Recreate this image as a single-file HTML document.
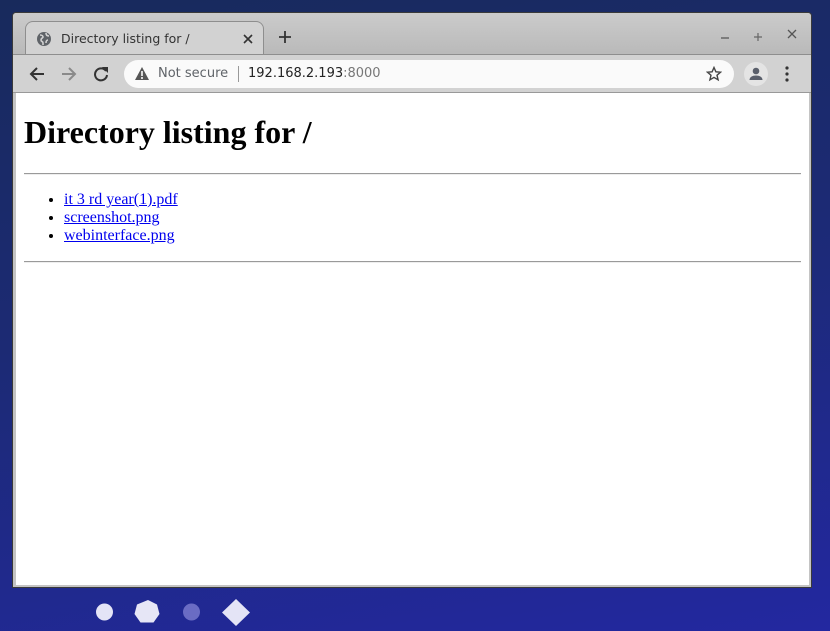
<!DOCTYPE html>
<html><head><meta charset="utf-8"><style>
*{box-sizing:border-box}
html,body{margin:0;width:830px;height:631px;overflow:hidden}
body{background:linear-gradient(170deg,#182a5c 0%,#1c2a74 45%,#2328a0 100%);position:relative;font-family:"Liberation Sans","DejaVu Sans",sans-serif}
.win{position:absolute;left:12px;top:12px;width:800px;height:576px;background:#c4c4c4;border:1px solid #3a3a3a;border-radius:4px 4px 0 0;overflow:hidden}
.tabs{position:absolute;left:0;top:0;right:0;height:42px;background:linear-gradient(#cbcbcb,#b9b9b9)}
.tab{position:absolute;left:12px;top:8px;width:239px;height:34px;background:#d2d2d2;border:1px solid #8e8e8e;border-bottom:none;border-radius:8px 8px 0 0}
.tab .t{position:absolute;left:35px;top:9px;color:#333;font-family:"DejaVu Sans",sans-serif;font-size:12.5px}
.toolbar{position:absolute;left:0;top:41px;right:0;height:39px;background:#d2d2d2;border-top:1px solid #8e8e8e;border-bottom:1px solid #999}
.omni{position:absolute;left:111px;top:5px;width:610px;height:28px;background:#fafafa;border-radius:14px}
.omni .ns{position:absolute;left:34px;top:6px;color:#5f6368;font-family:"DejaVu Sans",sans-serif;font-size:13px}
.omni .sep{position:absolute;left:114px;top:6px;width:1px;height:16px;background:#999}
.omni .url{position:absolute;left:124px;top:6px;font-family:"DejaVu Sans",sans-serif;font-size:13px;color:#222}
.content{position:absolute;left:3px;top:80px;width:793px;height:492px;background:#fff}
.page{margin:8px;font-family:"Liberation Serif",serif;font-size:16px;color:#000}
h1{font-size:32px;margin:21.44px 0}
hr{border:none;border-top:1px solid #9a9a9a;border-bottom:1px solid #eee;margin:8px 0}
ul{margin:16px 0;padding-left:40px}
a{color:#0000ee}
svg{position:absolute}
</style></head><body>
<div class="win">
 <div class="tabs">
  <div class="tab"><svg style="left:10px;top:9px" width="16" height="16" viewBox="0 0 16 16"><circle cx="8" cy="8" r="7" fill="#5f6368"/><path d="M4 4c2 0 3 1 3 2s-2 1-2 3 2 1 2 3v2M10 2c0 2 1 3 3 3M12 9c-1 0-2 1-2 3" stroke="#d2d2d2" stroke-width="1.6" fill="none"/></svg><span class="t">Directory listing for /</span>
  <svg style="left:217px;top:12px" width="10" height="10"><path d="M1 1L9 9M9 1L1 9" stroke="#333" stroke-width="1.6"/></svg></div>
  <svg style="left:265px;top:17px" width="14" height="14"><path d="M7 1v12M1 7h12" stroke="#333" stroke-width="1.8"/></svg>
  <svg style="left:707px;top:20px" width="10" height="10"><path d="M1 5h8" stroke="#555" stroke-width="1.2"/></svg>
  <svg style="left:740px;top:19px" width="10" height="10"><path d="M5 1v8M1 5h8" stroke="#666" stroke-width="1.2"/></svg>
  <svg style="left:774px;top:16px" width="10" height="10"><path d="M1 1L9 9M9 1L1 9" stroke="#555" stroke-width="1.3"/></svg>
 </div>
 <div class="toolbar">
  <svg style="left:16px;top:11px" width="16" height="16"><path d="M15 8H2M8 2L2 8l6 6" stroke="#333" stroke-width="2" fill="none"/></svg>
  <svg style="left:48px;top:11px" width="16" height="16"><path d="M1 8h13M8 2l6 6-6 6" stroke="#8a8a8a" stroke-width="2" fill="none"/></svg>
  <svg style="left:80px;top:11px" width="16" height="16"><path d="M13 5A6 6 0 1 0 14 9" stroke="#333" stroke-width="2" fill="none"/><path d="M9 1h6v6z" fill="#333"/></svg>
  <div class="omni">
   <svg style="left:11px;top:7px" width="14" height="13"><path d="M7 0L14 13H0z" fill="#555"/><path d="M7 4v5M7 10v2" stroke="#fafafa" stroke-width="1.6"/></svg>
   <span class="ns">Not secure</span><span class="sep"></span>
   <span class="url">192.168.2.193<span style="color:#777">:8000</span></span>
   <svg style="left:582px;top:6px" width="16" height="16" viewBox="0 0 16 16"><path d="M8 1.5l1.9 4.3 4.6.4-3.5 3 1.1 4.6L8 11.4l-4.1 2.4 1.1-4.6-3.5-3 4.6-.4z" stroke="#444" stroke-width="1.4" fill="none"/></svg>
  </div>
  <svg style="left:730px;top:6px" width="26" height="26"><circle cx="13" cy="13" r="12" fill="#e4e4e4"/><circle cx="13" cy="10" r="3.3" fill="#5a5f6b"/><path d="M6.5 19c0-3 3-4.5 6.5-4.5s6.5 1.5 6.5 4.5z" fill="#5a5f6b"/></svg>
  <svg style="left:772px;top:11px" width="4" height="16"><circle cx="2" cy="2" r="1.6" fill="#333"/><circle cx="2" cy="8" r="1.6" fill="#333"/><circle cx="2" cy="14" r="1.6" fill="#333"/></svg>
 </div>
 <div class="content"><div class="page">
  <h1>Directory listing for /</h1>
  <hr>
  <ul><li><a href="#">it 3 rd year(1).pdf</a></li><li><a href="#">screenshot.png</a></li><li><a href="#">webinterface.png</a></li></ul>
  <hr>
 </div></div>
</div>
<svg style="left:94px;top:598px" width="160" height="30">
 <circle cx="10.5" cy="14" r="8.5" fill="#e4e4f6"/>
 <path d="M54 2l9 4.5 2.5 9.5-6 8.5H46.5l-6-8.5L43 6.5z" fill="#e6e6f6"/>
 <circle cx="97.5" cy="14" r="8.5" fill="#6a6cc4"/>
 <path d="M142 1l14 13.5-14 13.5-14-13.5z" fill="#e4e4f6"/>
</svg>
</body></html>
